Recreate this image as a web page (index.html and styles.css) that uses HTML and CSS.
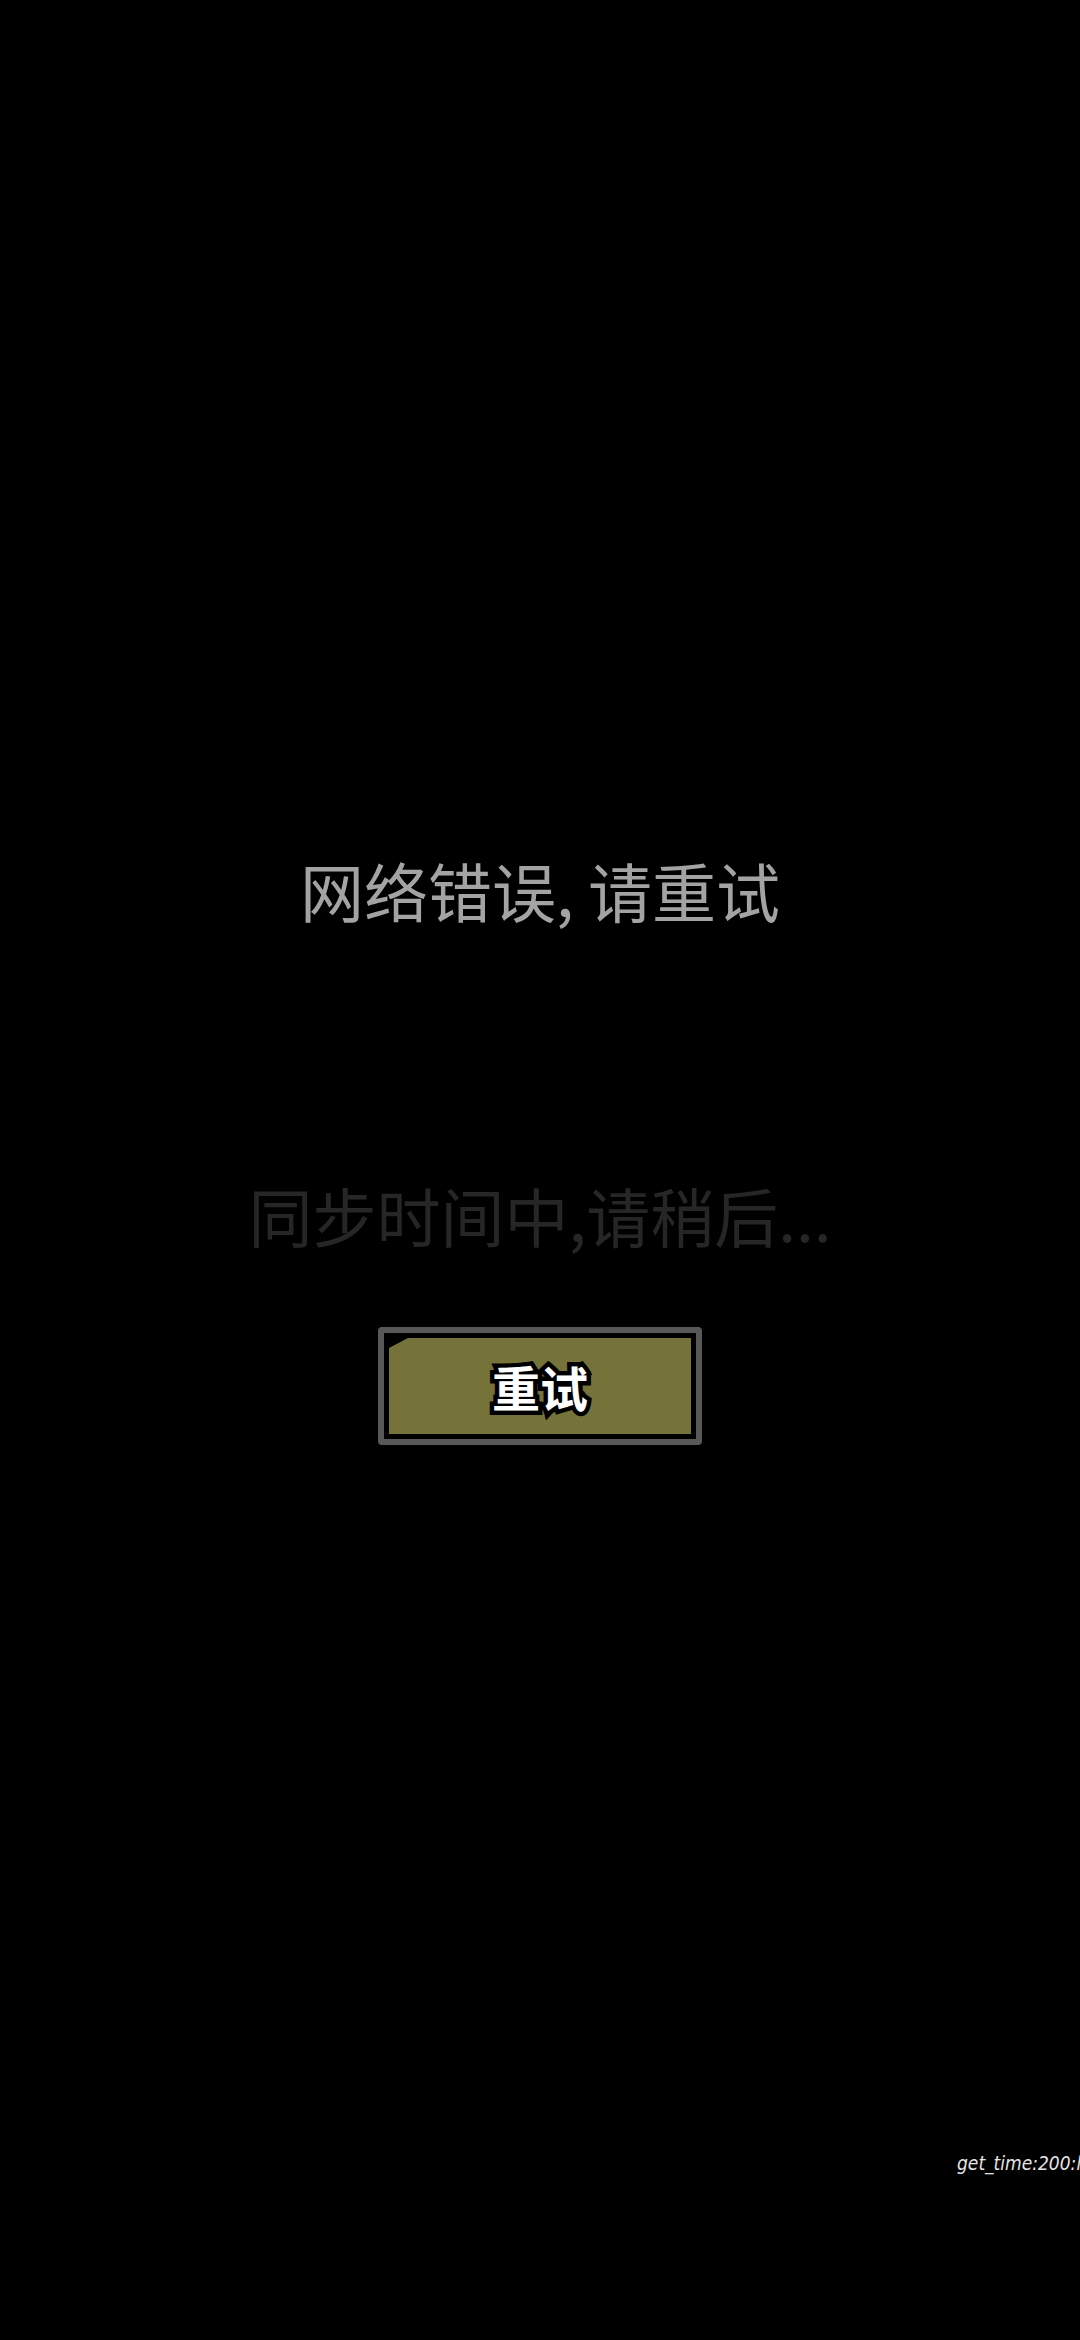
FILE: index.html
```html
<!DOCTYPE html>
<html lang="zh">
<head>
<meta charset="utf-8">
<link rel="stylesheet" href="styles.css">
</head>
<body>
<main class="screen">
  <p class="error">网络错误, 请重试</p>
  <p class="sync">同步时间中,请稍后...</p>
  <div class="btn-frame">
    <button class="btn">重试</button>
  </div>
</main>
<div class="debug">get_time:200:l</div>
</body>
</html>
```

FILE: styles.css
```css
html, body {
  margin: 0;
  padding: 0;
  background: #000;
}
body {
  width: 1080px;
  height: 2340px;
  overflow: hidden;
  position: relative;
  font-family: "Noto Sans CJK SC", "Noto Sans", sans-serif;
}
.screen {
  display: flex;
  flex-direction: column;
  align-items: center;
  padding-top: 857px;
}
.error {
  margin: 0;
  font-size: 64px;
  line-height: 64px;
  color: #a3a3a3;
}
.sync {
  margin: 261px 0 0;
  font-size: 64px;
  line-height: 64px;
  color: #262626;
}
.btn-frame {
  margin-top: 81px;
  width: 302px;
  height: 96px;
  border: 6px solid #585858;
  border-radius: 4px;
  background: #000;
  padding: 5px;
  box-sizing: content-box;
  display: flex;
}
.btn {
  flex: 1;
  border: 0;
  margin: 0;
  padding: 0;
  background: #76733a;
  clip-path: polygon(19px 0, 100% 0, 100% 100%, 0 100%, 0 10px);
  font-family: "Noto Sans CJK SC", sans-serif;
  font-weight: 700;
  font-size: 48px;
  line-height: 1;
  color: #fff;
  -webkit-text-stroke: 9px #000;
  paint-order: stroke fill;
  display: flex;
  align-items: center;
  justify-content: center;
}
.debug {
  position: absolute;
  left: 957px;
  top: 2152px;
  font-family: "DejaVu Sans Condensed", "DejaVu Sans", sans-serif;
  font-style: italic;
  font-size: 19px;
  color: #e6e6e6;
  white-space: nowrap;
}
```
